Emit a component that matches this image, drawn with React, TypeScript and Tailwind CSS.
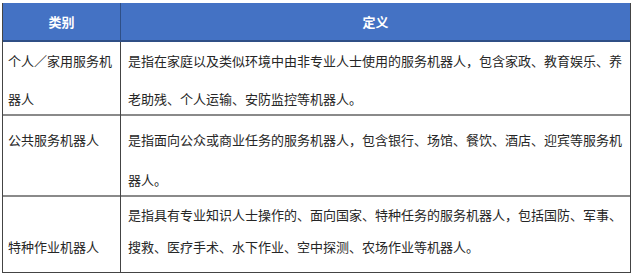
export default function App() {
  const font = { fontFamily: '"Noto Sans CJK SC", "Noto Sans", sans-serif' };

  return (
    <div className="w-[632px] h-[276px] bg-white pt-[3px] pl-[2px]" style={font}>
      <div className="w-[629px] border-x border-b border-[#444] text-[13px] text-[#262626]">
        {/* Header */}
        <div className="grid grid-cols-[118px_1fr] h-[39px] bg-[#4472c4] text-white font-bold border-b-2 border-[#2f4f86]">
          <div className="flex items-center justify-center border-r border-[#2f4f86]">类别</div>
          <div className="flex items-center justify-center">定义</div>
        </div>

        {/* Row 1 */}
        <div className="grid grid-cols-[118px_1fr] h-[74px] border-b-2 border-[#8a8a8a]">
          <div className="pl-[5px] pr-[2px] leading-[38px] border-r border-[#444]">个人／家用服务机器人</div>
          <div className="pl-[7px] pr-[6px] leading-[38px]">
            是指在家庭以及类似环境中由非专业人士使用的服务机器人，包含家政、教育娱乐、养老助残、个人运输、安防监控等机器人。
          </div>
        </div>

        {/* Row 2 */}
        <div className="grid grid-cols-[118px_1fr] h-[81px] border-b-2 border-[#8a8a8a]">
          <div className="pl-[5px] pt-[4px] leading-[40px] border-r border-[#444]">公共服务机器人</div>
          <div className="pl-[7px] pr-[6px] pt-[4px] leading-[40px]">
            是指面向公众或商业任务的服务机器人，包含银行、场馆、餐饮、酒店、迎宾等服务机器人。
          </div>
        </div>

        {/* Row 3 */}
        <div className="grid grid-cols-[118px_1fr] h-[75px]">
          <div className="pl-[5px] pt-[34px] leading-[32px] border-r border-[#444]">特种作业机器人</div>
          <div className="pl-[7px] pr-[6px] pt-[2px] leading-[32px]">
            是指具有专业知识人士操作的、面向国家、特种任务的服务机器人，包括国防、军事、搜救、医疗手术、水下作业、空中探测、农场作业等机器人。
          </div>
        </div>
      </div>
    </div>
  );
}
